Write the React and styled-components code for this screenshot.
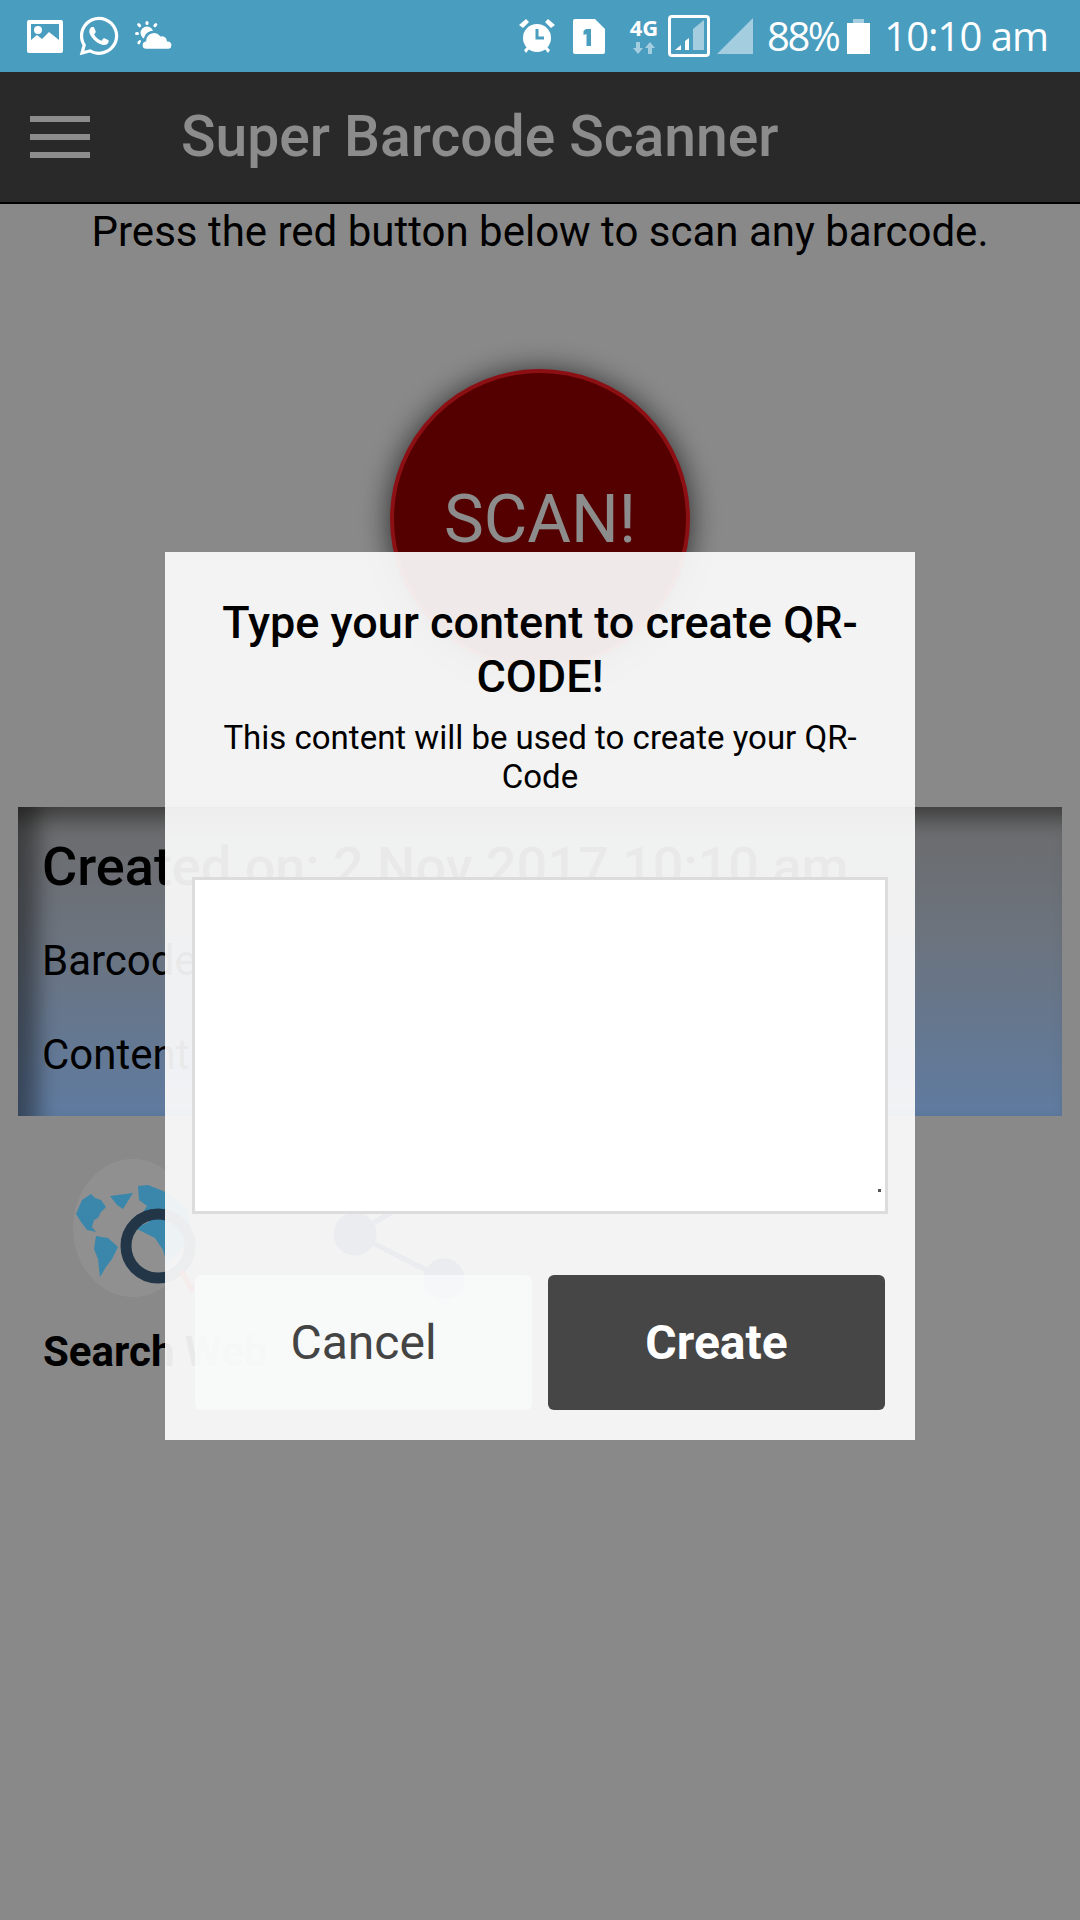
import styled, { createGlobalStyle } from "styled-components";
import { FaWhatsapp } from "react-icons/fa";

const Global = createGlobalStyle`
  html, body {
    margin: 0;
    padding: 0;
    background: #fafafa;
  }
  * {
    box-sizing: border-box;
  }
`;

const Screen = styled.div`
  position: relative;
  width: 1080px;
  height: 1920px;
  overflow: hidden;
  font-family: Roboto, "Liberation Sans", sans-serif;
  background: #fafafa;
  color: #000;
`;

const StatusBar = styled.div`
  height: 72px;
  background: #499dbf;
  color: #fff;
  display: flex;
  align-items: center;
  padding: 0 32px 0 27px;
`;

const StatusLeft = styled.div`
  display: flex;
  align-items: center;
  gap: 14px;
  flex: 1;
`;

const StatusRight = styled.div`
  display: flex;
  align-items: center;
`;

const StatusText = styled.span`
  font-family: "Open Sans", sans-serif;
  font-size: 40px;
  line-height: 72px;
  letter-spacing: ${(p) => p.$track}px;
  margin-left: ${(p) => p.$left}px;
`;

const Glyph = styled.svg`
  display: block;
  flex: none;
  margin-left: ${(p) => p.$left || 0}px;
`;

const Network = styled.div`
  width: 30px;
  margin-left: 24px;
  display: flex;
  flex-direction: column;
  align-items: center;
  gap: 6px;
  font-family: "Open Sans", sans-serif;
  font-size: 22px;
  line-height: 18px;
  font-weight: 700;
`;

const AppBar = styled.header`
  height: 132px;
  background: #4c4c4c;
  border-bottom: 2px solid #000;
  display: flex;
  align-items: center;
  padding-left: 30px;
  gap: 91px;
`;

const Burger = styled.div`
  width: 60px;
  display: flex;
  flex-direction: column;
  gap: 12px;
  & > i {
    display: block;
    height: 6px;
    background: #ffffff;
  }
`;

const AppTitle = styled.h1`
  margin: 0;
  font-size: 57px;
  line-height: 64px;
  font-weight: 500;
  color: #ffffff;
`;

const Hint = styled.p`
  margin: 0;
  padding-top: 3px;
  font-size: 42px;
  line-height: 50px;
  text-align: center;
`;

const ScanButton = styled.div`
  width: 300px;
  height: 300px;
  margin: 112px auto 0;
  border-radius: 50%;
  background: #9b0000;
  border: 4px solid #ff1d26;
  box-shadow: 0 2px 30px rgba(0, 0, 0, 0.7);
  color: #fff;
  font-size: 67px;
  display: flex;
  align-items: center;
  justify-content: center;
`;

/* Card and shortcuts sit above the backdrop with their dimmed colours painted directly */
const Card = styled.section`
  position: relative;
  z-index: 2;
  margin: 138px 18px 0;
  height: 309px;
  padding: 30px 25px 0 24px;
  background: linear-gradient(180deg, #6b6b6b 0%, #6c737d 40%, #5f7ba0 100%);
  box-shadow: inset 0 26px 20px -14px rgba(0, 0, 0, 0.4), inset 34px 0 20px -14px rgba(0, 0, 0, 0.4);
`;

const CardTitle = styled.h2`
  margin: 0 0 40px;
  font-size: 54px;
  line-height: 60px;
  font-weight: 500;
  white-space: nowrap;
`;

const CardRow = styled.p`
  margin: 0 0 47px;
  font-size: 42px;
  line-height: 47px;
`;

const Shortcuts = styled.div`
  position: relative;
  z-index: 2;
  display: flex;
  padding: 43px 0 0 43px;
`;

const Shortcut = styled.div`
  width: 257px;
  display: flex;
  flex-direction: column;
  gap: 29px;
  font-size: 42px;
  line-height: 48px;
  font-weight: 700;
  white-space: nowrap;
`;

const ShortcutIcon = styled.div`
  margin-left: 30px;
  height: 140px;
`;

const Backdrop = styled.div`
  position: absolute;
  z-index: 1;
  top: 72px;
  left: 0;
  right: 0;
  bottom: 0;
  background: rgba(0, 0, 0, 0.45);
`;

const ModalLayer = styled.div`
  position: absolute;
  z-index: 3;
  top: 552px;
  left: 165px;
`;

const Modal = styled.div`
  width: 750px;
  height: 888px;
  padding: 44px 27px 0;
  background: rgba(251, 251, 251, 0.93);
  text-align: center;
`;

const ModalTitle = styled.h3`
  margin: 0;
  font-size: 45px;
  line-height: 54px;
  font-weight: 500;
`;

const ModalText = styled.p`
  margin: 14px 0 0;
  font-size: 33px;
  line-height: 39px;
`;

const Area = styled.div`
  height: 337px;
  margin-top: 81px;
  background: #fff;
  border: 3px solid #dcdcdc;
  position: relative;
  &::after {
    content: "";
    position: absolute;
    right: 4px;
    bottom: 19px;
    width: 3px;
    height: 3px;
    background: #555;
  }
`;

const Actions = styled.div`
  display: flex;
  gap: 16px;
  margin-top: 61px;
  padding: 0 3px;
`;

const ActionButton = styled.div`
  flex: 1;
  height: 135px;
  border-radius: 6px;
  font-size: 48px;
  font-weight: ${(p) => (p.$primary ? 700 : 400)};
  color: ${(p) => (p.$primary ? "#fff" : "#444")};
  background: ${(p) => (p.$primary ? "#464646" : "rgba(249, 250, 250, 0.8)")};
  display: flex;
  align-items: center;
  justify-content: center;
`;

function ImageIcon() {
  return (
    <Glyph width="36" height="33" viewBox="0 0 36 33">
      <path fill="#fff" fillRule="evenodd" d="M2 0h32a2 2 0 0 1 2 2v29a2 2 0 0 1-2 2H2a2 2 0 0 1-2-2V2a2 2 0 0 1 2-2zM4 4v16l6-5 5 4 7-7 10 8V4zM11 6a4 4 0 1 1 0 8 4 4 0 0 1 0-8z" />
    </Glyph>
  );
}

function CloudIcon() {
  return (
    <Glyph width="38" height="30" viewBox="0 0 38 30">
      <g fill="#fff">
        <circle cx="12" cy="12" r="6.500" />
        <rect x="10.500" y="0" width="3" height="4" rx="1.500" />
        <rect x="0" y="11" width="4" height="3" rx="1.500" />
        <rect x="2.500" y="2" width="3" height="4.500" rx="1.500" transform="rotate(-40 4 4)" />
        <rect x="19" y="2" width="3" height="4.500" rx="1.500" transform="rotate(40 20.500 4)" />
        <rect x="3" y="19" width="3" height="4.500" rx="1.500" transform="rotate(40 4.500 21)" />
      </g>
      <path fill="#fff" stroke="#499dbf" strokeWidth="2.500" d="M11 29a5 5 0 0 1-1-9.800a9 9 0 0 1 16-5a6 6 0 0 1 7 5a5 5 0 0 1 1 9.800z" />
    </Glyph>
  );
}

function AlarmIcon() {
  return (
    <Glyph width="36" height="36" viewBox="0 0 36 36">
      <circle cx="18" cy="20" r="14" fill="#fff" />
      <path d="M18 11v9h7" fill="none" stroke="#499dbf" strokeWidth="3" />
      <path d="M0 7 7 1l3 3-6 6zM36 7 29 1l-3 3 6 6zM5 32l4-4 2 2-4 5zM31 32l-4-4-2 2 4 5z" fill="#fff" />
    </Glyph>
  );
}

function SimIcon() {
  return (
    <Glyph width="32" height="35" viewBox="0 0 32 35" $left={18}>
      <path fill="#fff" d="M2 0h20l10 10v23a2 2 0 0 1-2 2H2a2 2 0 0 1-2-2V2a2 2 0 0 1 2-2z" />
      <path fill="#499dbf" d="M13 10h5v17h-4.500V15l-3 1v-4z" />
    </Glyph>
  );
}

function ArrowsIcon() {
  return (
    <Glyph width="26" height="12" viewBox="0 0 26 12">
      <path fill="#fff" fillOpacity="0.5" d="M5 0h4v6h3l-5 6-5-6h3zM21 12h-4V6h-3l5-6 5 6h-3z" />
    </Glyph>
  );
}

function SignalIcon() {
  return (
    <Glyph width="42" height="42" viewBox="0 0 42 42" $left={9}>
      <rect x="1.500" y="1.500" width="39" height="39" rx="2.500" fill="none" stroke="#fff" strokeWidth="3" />
      <path fill="#fff" fillOpacity="0.5" d="M25 35V14l11-9v30z" />
      <path fill="#fff" d="M7 35l6-5v5zM17 35V26l4-3v12z" />
    </Glyph>
  );
}

function TriangleIcon() {
  return (
    <Glyph width="36" height="36" viewBox="0 0 36 36" $left={7}>
      <path fill="#fff" fillOpacity="0.5" d="M0 36 36 0v36z" />
    </Glyph>
  );
}

function BatteryIcon() {
  return (
    <Glyph width="23" height="35" viewBox="0 0 23 35" $left={9}>
      <path fill="#fff" fillOpacity="0.5" d="M6 0h11v4H6z" />
      <path fill="#fff" d="M0 4h23v31H0z" />
    </Glyph>
  );
}

function GlobeIcon() {
  return (
    <Glyph width="140" height="140" viewBox="0 0 140 140">
      <ellipse cx="60" cy="69" rx="60" ry="69" fill="#909090" />
      <g fill="#3a87ab">
        <path d="M3 55l6-14 9-6 4 4 6 2 5 7-5 5-3 6-4 2-2 7 4 5-9-2-6-8z" />
        <path d="M23 77l12 2 10 9-6 12-6 8-6 10-2-18-4-10z" />
        <path d="M37 37l23-3-10 16-6-4z" />
        <path d="M65 27l10-1 20 8 20 16 3 22-10 18-14 15-4-14-8-12-12-6-8-4 14-6-6-10 4-6-8-6z" />
      </g>
      <circle cx="85" cy="87" r="32" fill="none" stroke="#233648" strokeWidth="11" />
      <path d="M108 112l12 20" stroke="#b02a20" strokeWidth="5" />
    </Glyph>
  );
}

function ShareIcon() {
  return (
    <Glyph width="140" height="140" viewBox="0 0 140 140">
      <g fill="#142a60" stroke="#142a60">
        <circle cx="25" cy="75" r="21" />
        <circle cx="114" cy="120" r="20" />
        <circle cx="114" cy="22" r="20" />
        <path d="M25 75 114 22M25 75l89 45" strokeWidth="5" fill="none" />
      </g>
    </Glyph>
  );
}

export default function App() {
  return (
    <Screen>
      <Global />
      <StatusBar>
        <StatusLeft>
          <ImageIcon />
          <FaWhatsapp size={44} />
          <CloudIcon />
        </StatusLeft>
        <StatusRight>
          <AlarmIcon />
          <SimIcon />
          <Network>
            4G
            <ArrowsIcon />
          </Network>
          <SignalIcon />
          <TriangleIcon />
          <StatusText $left={14} $track={-2.5}>88%</StatusText>
          <BatteryIcon />
          <StatusText $left={14} $track={-1}>10:10 am</StatusText>
        </StatusRight>
      </StatusBar>
      <AppBar>
        <Burger>
          <i />
          <i />
          <i />
        </Burger>
        <AppTitle>Super Barcode Scanner</AppTitle>
      </AppBar>
      <Hint>Press the red button below to scan any barcode.</Hint>
      <ScanButton>SCAN!</ScanButton>
      <Card>
        <CardTitle>Created on: 2 Nov 2017 10:10 am</CardTitle>
        <CardRow>Barcode</CardRow>
        <CardRow>Content</CardRow>
      </Card>
      <Shortcuts>
        <Shortcut>
          <ShortcutIcon>
            <GlobeIcon />
          </ShortcutIcon>
          Search Web
        </Shortcut>
        <Shortcut>
          <ShortcutIcon>
            <ShareIcon />
          </ShortcutIcon>
        </Shortcut>
      </Shortcuts>
      <Backdrop />
      <ModalLayer>
        <Modal>
          <ModalTitle>Type your content to create QR-CODE!</ModalTitle>
          <ModalText>This content will be used to create your QR-Code</ModalText>
          <Area />
          <Actions>
            <ActionButton>Cancel</ActionButton>
            <ActionButton $primary>Create</ActionButton>
          </Actions>
        </Modal>
      </ModalLayer>
    </Screen>
  );
}
